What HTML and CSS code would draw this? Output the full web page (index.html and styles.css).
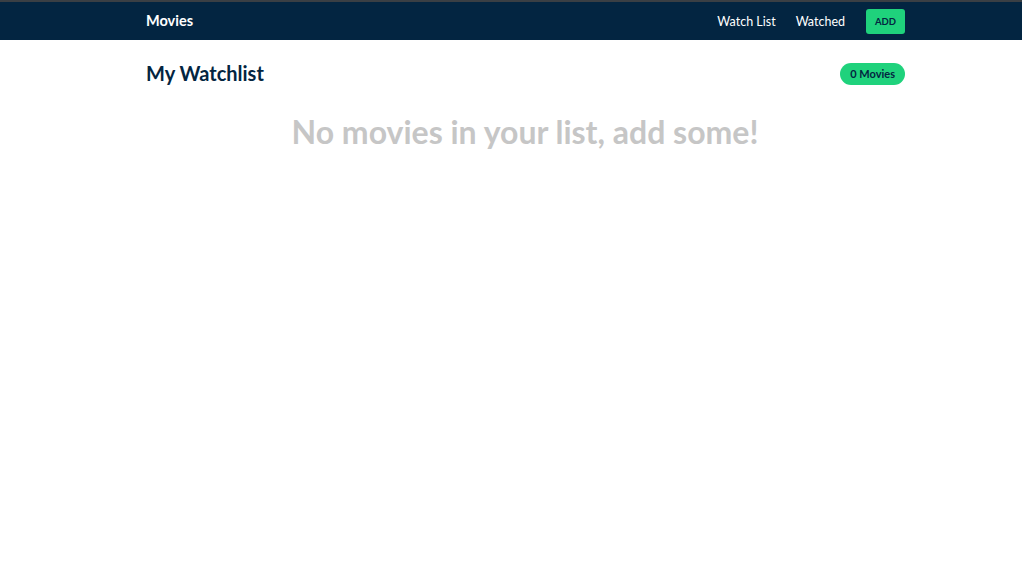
FILE: index.html
```html
<!DOCTYPE html>
<html lang="en">
<head>
<meta charset="utf-8">
<title>Movies</title>
<link rel="stylesheet" href="styles.css">
</head>
<body>
<header class="navbar">
  <div class="container nav-inner">
    <a class="brand" href="#">Movies</a>
    <nav class="nav-links">
      <a class="nav-link" href="#">Watch List</a>
      <a class="nav-link" href="#">Watched</a>
      <a class="btn-add" href="#">ADD</a>
    </nav>
  </div>
</header>
<main class="container page">
  <div class="page-head">
    <h1 class="title">My Watchlist</h1>
    <span class="count-pill">0 Movies</span>
  </div>
  <h2 class="empty">No movies in your list, add some!</h2>
</main>
</body>
</html>
```
FILE: styles.css
```css
* { box-sizing: border-box; }
html, body { margin: 0; padding: 0; background: #fff; }
body {
  font-family: Lato, "Open Sans", "Liberation Sans", sans-serif;
  color: #032541;
}
a { text-decoration: none; }
.container {
  width: 760px;
  margin-left: 145px;
}
.navbar {
  background: #032541;
  border-top: 2px solid #3a3f44;
  height: 40px;
}
.nav-inner {
  height: 38px;
  display: flex;
  align-items: center;
  justify-content: space-between;
}
.brand {
  color: #fff;
  font-weight: 700;
  font-size: 14.5px;
  padding-left: 1px;
  margin-top: -2px;
}
.nav-links {
  display: flex;
  align-items: center;
  gap: 20px;
}
.nav-link {
  color: #fff;
  font-size: 12.5px;
}
.btn-add {
  margin-left: 1px;
  background: #1fd27c;
  color: #032541;
  font-size: 9.5px;
  font-weight: 700;
  width: 39px;
  height: 25px;
  border-radius: 3px;
  display: flex;
  align-items: center;
  justify-content: center;
}
.page-head {
  display: flex;
  align-items: center;
  justify-content: space-between;
  margin-top: 22px;
}
.title {
  margin: -1px 0 0;
  font-size: 20px;
  font-weight: 700;
  padding-left: 1px;
}
.count-pill {
  background: #1fd27c;
  color: #032541;
  font-size: 11px;
  font-weight: 700;
  height: 22px;
  padding: 0 10px;
  border-radius: 11px;
  display: flex;
  align-items: center;
}
.empty {
  margin: 27px 0 0;
  text-align: center;
  color: #c6c6c6;
  font-size: 32px;
  font-weight: 700;
}
```
